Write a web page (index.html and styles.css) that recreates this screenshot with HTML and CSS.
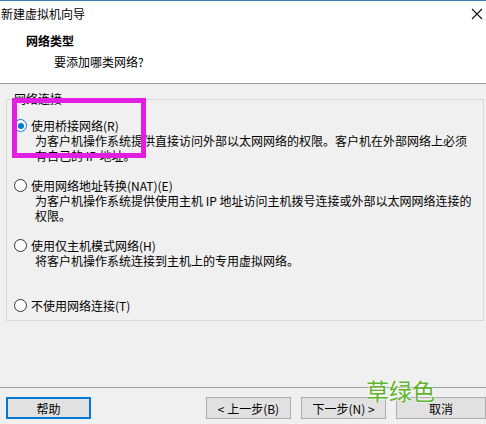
FILE: index.html
```html
<!doctype html>
<html lang="zh-CN">
  <head>
    <meta charset="UTF-8" />
    <title>新建虚拟机向导</title>
    <link rel="stylesheet" href="styles.css">
  </head>
  <body>
    <div class="dialog">
      <!-- Header -->
      <div class="header">
        <div class="titlebar">
          <span class="title">新建虚拟机向导</span>
          <svg class="close" width="12" height="12" viewBox="0 0 12 12">
            <path d="M1 1 L11 11 M11 1 L1 11" stroke="#111" stroke-width="1.1" fill="none" />
          </svg>
        </div>
        <div class="heading">网络类型</div>
        <div class="subheading">要添加哪类网络?</div>
      </div>

      <!-- Network options -->
      <fieldset class="group">
        <legend>网络连接</legend>
        <div class="options">
          <div class="option">
            <div class="option-label"><span class="radio checked"></span>使用桥接网络(R)</div>
            <div class="option-desc">为客户机操作系统提供直接访问外部以太网网络的权限。客户机在外部网络上必须<br>有自己的 IP 地址。</div>
          </div>
          <div class="option">
            <div class="option-label"><span class="radio"></span>使用网络地址转换(NAT)(E)</div>
            <div class="option-desc">为客户机操作系统提供使用主机 IP 地址访问主机拨号连接或外部以太网网络连接的<br>权限。</div>
          </div>
          <div class="option">
            <div class="option-label"><span class="radio"></span>使用仅主机模式网络(H)</div>
            <div class="option-desc">将客户机操作系统连接到主机上的专用虚拟网络。</div>
          </div>
          <div class="option last">
            <div class="option-label"><span class="radio"></span>不使用网络连接(T)</div>
          </div>
        </div>
      </fieldset>

      <!-- Buttons -->
      <div class="footer">
        <button class="btn default">帮助</button>
        <div class="spacer"></div>
        <button class="btn">&lt; 上一步(B)</button>
        <button class="btn">下一步(N) &gt;</button>
        <button class="btn cut">取消</button>
      </div>

      <!-- Annotations drawn over the screenshot -->
      <div class="highlight"></div>
      <div class="watermark">草绿色</div>
    </div>
  </body>
</html>
```

FILE: styles.css
```css
body {
  margin: 0;
  font-family: "Noto Sans CJK SC", "Liberation Sans", sans-serif;
  font-size: 12px;
  color: #000;
  background: #f0f0f0;
}

.dialog {
  position: relative;
  width: 486px;
  height: 424px;
  overflow: hidden;
  background: #f0f0f0;
}

.header {
  height: 82px;
  background: #fff;
  border-top: 1px solid #3b7bb5;
  border-bottom: 1px solid #a0a0a0;
}

.titlebar {
  height: 26px;
  display: flex;
  align-items: center;
  justify-content: space-between;
  padding: 0 3px 0 1px;
}

.title {
  line-height: 16px;
}

.heading {
  margin-top: 6px;
  padding-left: 26px;
  font-weight: bold;
  line-height: 15px;
}

.subheading {
  margin-top: 6px;
  padding-left: 54px;
  line-height: 15px;
}

.group {
  margin: 8px 2px 0 6px;
  padding: 0 0 7px 6px;
  border: 1px solid #d9d9d9;
  min-width: 0;
}

.group legend {
  padding: 0 1px;
  line-height: 14px;
  color: #000;
}

.options {
  padding-top: 12px;
}

.option {
  height: 60px;
}

.option.last {
  height: 15px;
}

.option-label {
  display: flex;
  align-items: center;
  line-height: 15px;
}

.radio {
  width: 11px;
  height: 11px;
  margin: 0 4px 0 1px;
  border: 1px solid #333;
  border-radius: 50%;
  background: #fff;
  display: flex;
  align-items: center;
  justify-content: center;
}

.radio.checked {
  border-color: #0078d7;
}

.radio.checked::after {
  content: "";
  width: 6px;
  height: 6px;
  border-radius: 50%;
  background: #0078d7;
}

.option-desc {
  padding-left: 22px;
  line-height: 15px;
  white-space: nowrap;
}

.footer {
  margin-top: 66px;
  padding: 9px 0 0 6px;
  border-top: 1px solid #a0a0a0;
  display: flex;
  gap: 10px;
}

.spacer {
  width: 100px;
}

.btn {
  flex: none;
  width: 85px;
  height: 22px;
  padding: 0;
  font-family: inherit;
  font-size: 12px;
  color: #000;
  background: #e1e1e1;
  border: 1px solid #adadad;
}

.btn.default {
  border: 2px solid #0078d7;
}

.btn.cut {
  width: 90px;
}

.highlight {
  position: absolute;
  left: 12px;
  top: 98px;
  width: 124px;
  height: 50px;
  border: 5px solid #e31ee3;
}

.watermark {
  position: absolute;
  left: 366px;
  top: 375px;
  font-size: 23px;
  line-height: 30px;
  color: #5fb22c;
  text-shadow: 0 0 2px #fff, 0 0 2px #fff;
}
```
